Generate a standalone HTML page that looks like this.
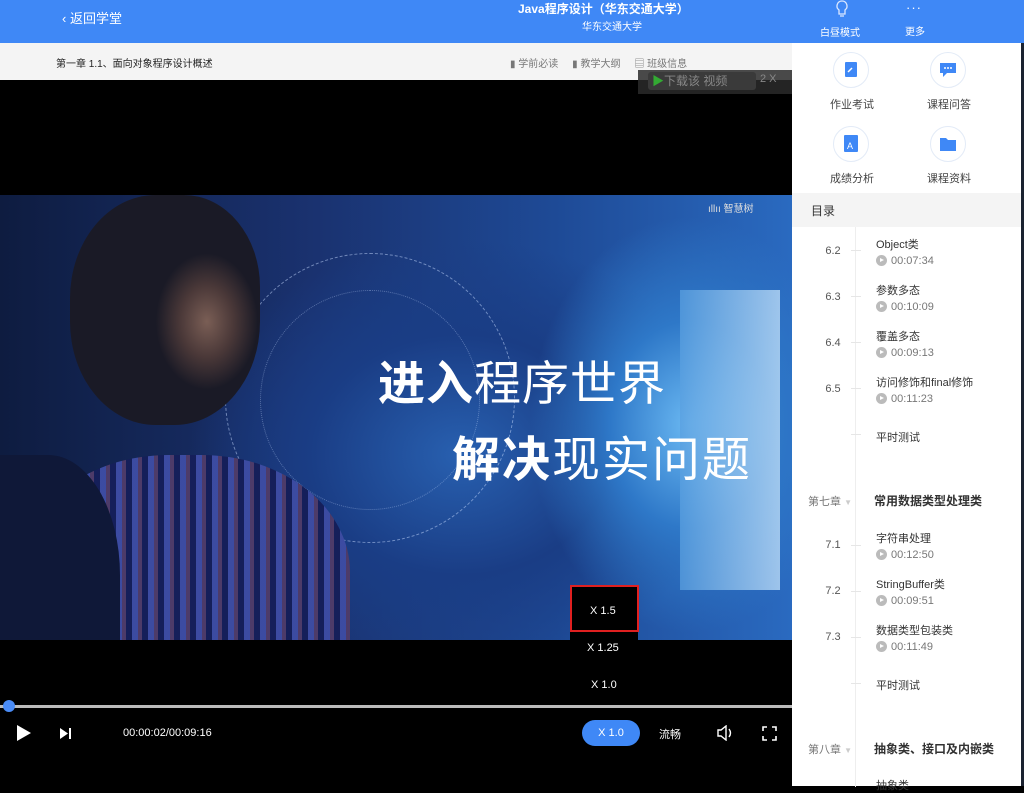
<!DOCTYPE html>
<html><head><meta charset="utf-8"><style>
*{margin:0;padding:0;box-sizing:border-box}
body{width:1024px;height:786px;overflow:hidden;background:#000;font-family:"Liberation Sans","Noto Sans CJK SC",sans-serif;position:relative}
.a{position:absolute;white-space:nowrap}
.hdr{left:0;top:0;width:1024px;height:43px;background:#3f88f6}
.sub{left:0;top:43px;width:792px;height:37px;background:#f4f4f4}
.rp{left:792px;top:43px;width:229px;height:743px;background:#fff}
.ic{width:36px;height:36px;border-radius:50%;border:1px solid #e3ebf7;background:#fff}
.lbl{font-size:11px;color:#444}
.num{font-size:11px;color:#555;width:30px;text-align:center}
.tt{font-size:11px;color:#333}
.tm{font-size:11px;color:#777}
.pl{display:inline-block;width:11px;height:11px;border-radius:50%;background:#bbb;vertical-align:-2px;margin-right:4px;position:relative}
.pl:after{content:"";position:absolute;left:4px;top:3px;border-left:4px solid #fff;border-top:2.5px solid transparent;border-bottom:2.5px solid transparent}
.tick{width:10px;height:1px;background:#e6e6e6;left:851px}
.w{color:#fff}
</style></head><body>
<div class="a hdr"></div>
<div class="a w" style="left:62px;top:8px;font-size:13px">‹&nbsp;返回学堂</div>
<div class="a w" style="left:518px;top:0px;font-size:12px;font-weight:bold">Java程序设计（华东交通大学）</div>
<div class="a w" style="left:582px;top:18px;font-size:10px">华东交通大学</div>
<svg class="a" style="left:834px;top:0" width="16" height="20" viewBox="0 0 16 20"><path d="M8 1a5 5 0 0 0-3 9v4h6v-4a5 5 0 0 0-3-9zM6 16h4" fill="none" stroke="#dce8ff" stroke-width="1.3"/></svg>
<div class="a w" style="left:820px;top:24px;font-size:10px">白昼模式</div>
<div class="a w" style="left:906px;top:0px;font-size:13px;letter-spacing:1px">···</div>
<div class="a w" style="left:905px;top:23px;font-size:10px">更多</div>
<div class="a sub"></div>
<div class="a" style="left:56px;top:55px;font-size:10px;color:#222">第一章 1.1、面向对象程序设计概述</div>
<div class="a" style="left:510px;top:55px;font-size:10px;color:#777">▮ 学前必读 &nbsp;&nbsp;&nbsp;&nbsp;▮ 教学大纲 &nbsp;&nbsp;&nbsp;&nbsp;▤ 班级信息</div>
<div class="a" style="left:638px;top:70px;width:154px;height:24px;background:#2a2a2a;opacity:.85"></div>
<div class="a" style="left:648px;top:72px;width:108px;height:18px;border-radius:3px;background:#3a3a3a;color:#888;font-size:12px;padding-left:4px"><span style="color:#3a3">▶</span>下载该 视频</div>
<div class="a" style="left:760px;top:73px;color:#888;font-size:11px">2 X</div>
<div class="a rp"></div>
<div class="a" style="left:1021px;top:43px;width:3px;height:743px;background:#1a2230"></div>
<div class="a ic" style="left:833px;top:52px"></div>
<svg class="a" style="left:844px;top:61px" width="14" height="17"><rect x="1" y="1" width="12" height="15" rx="1" fill="#3f88f6"/><path d="M4 11l4-4" stroke="#fff" stroke-width="1.5"/></svg>
<div class="a ic" style="left:930px;top:52px"></div>
<svg class="a" style="left:939px;top:62px" width="18" height="16"><path d="M1 1h16v10h-9l-4 4v-4h-3z" fill="#3f88f6"/><circle cx="6" cy="6" r="1" fill="#fff"/><circle cx="9" cy="6" r="1" fill="#fff"/><circle cx="12" cy="6" r="1" fill="#fff"/></svg>
<div class="a lbl" style="left:830px;top:96px">作业考试</div>
<div class="a lbl" style="left:927px;top:96px">课程问答</div>
<div class="a ic" style="left:833px;top:126px"></div>
<svg class="a" style="left:843px;top:134px" width="16" height="20"><rect x="1" y="1" width="14" height="17" rx="1" fill="#3f88f6"/><text x="4" y="15" font-size="9" fill="#fff" font-family="Liberation Sans">A</text></svg>
<div class="a ic" style="left:930px;top:126px"></div>
<svg class="a" style="left:939px;top:136px" width="18" height="16"><path d="M1 2h6l2 2h8v11h-16z" fill="#3f88f6"/></svg>
<div class="a lbl" style="left:830px;top:170px">成绩分析</div>
<div class="a lbl" style="left:927px;top:170px">课程资料</div>
<div class="a" style="left:792px;top:193px;width:229px;height:34px;background:#f4f4f4"></div>
<div class="a" style="left:811px;top:202px;font-size:12px;color:#333">目录</div>
<div class="a" style="left:855px;top:227px;width:1px;height:560px;background:#eee"></div>
<div class="a num" style="left:818px;top:245px">6.2</div><div class="a tick" style="top:250px"></div>
<div class="a tt" style="left:876px;top:236px">Object类</div><div class="a tm" style="left:876px;top:255px"><span class="pl"></span>00:07:34</div>
<div class="a num" style="left:818px;top:291px">6.3</div><div class="a tick" style="top:296px"></div>
<div class="a tt" style="left:876px;top:282px">参数多态</div><div class="a tm" style="left:876px;top:301px"><span class="pl"></span>00:10:09</div>
<div class="a num" style="left:818px;top:337px">6.4</div><div class="a tick" style="top:342px"></div>
<div class="a tt" style="left:876px;top:328px">覆盖多态</div><div class="a tm" style="left:876px;top:347px"><span class="pl"></span>00:09:13</div>
<div class="a num" style="left:818px;top:383px">6.5</div><div class="a tick" style="top:388px"></div>
<div class="a tt" style="left:876px;top:374px">访问修饰和final修饰</div><div class="a tm" style="left:876px;top:393px"><span class="pl"></span>00:11:23</div>
<div class="a tick" style="top:434px"></div><div class="a tt" style="left:876px;top:429px">平时测试</div>
<div class="a" style="left:808px;top:493px;font-size:11px;color:#777">第七章 <span style="color:#ccc;font-size:8px">▼</span></div>
<div class="a" style="left:874px;top:492px;font-size:12px;color:#333;font-weight:bold">常用数据类型处理类</div>
<div class="a num" style="left:818px;top:539px">7.1</div><div class="a tick" style="top:545px"></div>
<div class="a tt" style="left:876px;top:530px">字符串处理</div><div class="a tm" style="left:876px;top:549px"><span class="pl"></span>00:12:50</div>
<div class="a num" style="left:818px;top:585px">7.2</div><div class="a tick" style="top:591px"></div>
<div class="a tt" style="left:876px;top:576px">StringBuffer类</div><div class="a tm" style="left:876px;top:595px"><span class="pl"></span>00:09:51</div>
<div class="a num" style="left:818px;top:631px">7.3</div><div class="a tick" style="top:637px"></div>
<div class="a tt" style="left:876px;top:622px">数据类型包装类</div><div class="a tm" style="left:876px;top:641px"><span class="pl"></span>00:11:49</div>
<div class="a tick" style="top:683px"></div><div class="a tt" style="left:876px;top:677px">平时测试</div>
<div class="a" style="left:808px;top:741px;font-size:11px;color:#777">第八章 <span style="color:#ccc;font-size:8px">▼</span></div>
<div class="a" style="left:874px;top:740px;font-size:12px;color:#333;font-weight:bold">抽象类、接口及内嵌类</div>
<div class="a tt" style="left:876px;top:777px">抽象类</div>
<div class="a" style="left:0;top:195px;width:792px;height:445px;overflow:hidden;background:radial-gradient(ellipse 200px 260px at 690px 230px,#6ab8f2 0%,#2e78c8 40%,transparent 80%),radial-gradient(ellipse 300px 240px at 460px 260px,#2860b0 0%,#1a3d85 50%,transparent 90%),linear-gradient(90deg,#0e1c40,#1a3270 40%,#1e4a96 70%,#2a6ac0)">
<div class="a" style="left:225px;top:58px;width:290px;height:290px;border-radius:50%;border:1px dashed rgba(200,220,255,.5)"></div>
<div class="a" style="left:260px;top:95px;width:220px;height:220px;border-radius:50%;border:1px dotted rgba(200,220,255,.35)"></div>
<div class="a" style="left:20px;top:260px;width:330px;height:260px;border-radius:45% 45% 0 0;background:repeating-linear-gradient(90deg,rgba(90,110,220,.55) 0 6px,rgba(200,120,140,.3) 6px 10px,rgba(20,30,90,.7) 10px 16px),#18215a"></div>
<div class="a" style="left:0;top:260px;width:120px;height:200px;background:#0f1838;border-radius:0 60% 0 0"></div>
<div class="a" style="left:70px;top:0;width:190px;height:230px;border-radius:45% 40% 45% 45%;background:radial-gradient(ellipse 60px 80px at 72% 55%,#7a5e55 0%,#4a3838 45%,#1a1a26 85%)"></div>
<div class="a" style="left:680px;top:95px;width:100px;height:300px;background:linear-gradient(90deg,#5aa0e0,#c4e2fa);opacity:.75"></div>
<div class="a" style="left:378px;top:150px;font-size:47px;color:#fff;font-weight:bold;letter-spacing:1px">进入<span style="font-weight:normal">程序世界</span></div>
<div class="a" style="left:452px;top:225px;font-size:48px;color:#fff;font-weight:bold;letter-spacing:2px">解决<span style="font-weight:normal">现实问题</span></div>
<div class="a" style="left:708px;top:5px;font-size:10px;color:#ddd">ıllıı 智慧树</div>
</div>
<div class="a" style="left:570px;top:593px;width:68px;height:114px;background:#000"></div>
<div class="a" style="left:570px;top:585px;width:69px;height:47px;border:2px solid #e02020;background:#000"></div>
<div class="a w" style="left:590px;top:605px;font-size:11px">X 1.5</div>
<div class="a w" style="left:587px;top:642px;font-size:11px">X 1.25</div>
<div class="a w" style="left:591px;top:679px;font-size:11px">X 1.0</div>
<div class="a" style="left:0;top:705px;width:792px;height:3px;background:#bbb"></div>
<div class="a" style="left:3px;top:700px;width:12px;height:12px;border-radius:50%;background:#4a8cf7"></div>
<svg class="a" style="left:15px;top:724px" width="18" height="18"><path d="M2 1l14 8-14 8z" fill="#fff"/></svg>
<svg class="a" style="left:59px;top:727px" width="14" height="13"><path d="M1 1l8 5.5-8 5.5z" fill="#fff"/><rect x="10" y="1" width="2" height="11" fill="#fff"/></svg>
<div class="a w" style="left:123px;top:727px;font-size:11px">00:00:02/00:09:16</div>
<div class="a w" style="left:582px;top:720px;width:58px;height:26px;border-radius:13px;background:#3f88f6;text-align:center;line-height:26px;font-size:11px">X 1.0</div>
<div class="a w" style="left:659px;top:726px;font-size:11px">流畅</div>
<svg class="a" style="left:716px;top:725px" width="18" height="16"><path d="M2 5h3l5-4v14l-5-4h-3z" fill="none" stroke="#fff" stroke-width="1.4"/><path d="M13 4q3 4 0 8" fill="none" stroke="#fff" stroke-width="1.4"/></svg>
<svg class="a" style="left:762px;top:726px" width="15" height="15"><path d="M1 5V1h4M10 1h4v4M14 10v4h-4M5 14H1v-4" fill="none" stroke="#fff" stroke-width="1.6"/></svg>
</body></html>
